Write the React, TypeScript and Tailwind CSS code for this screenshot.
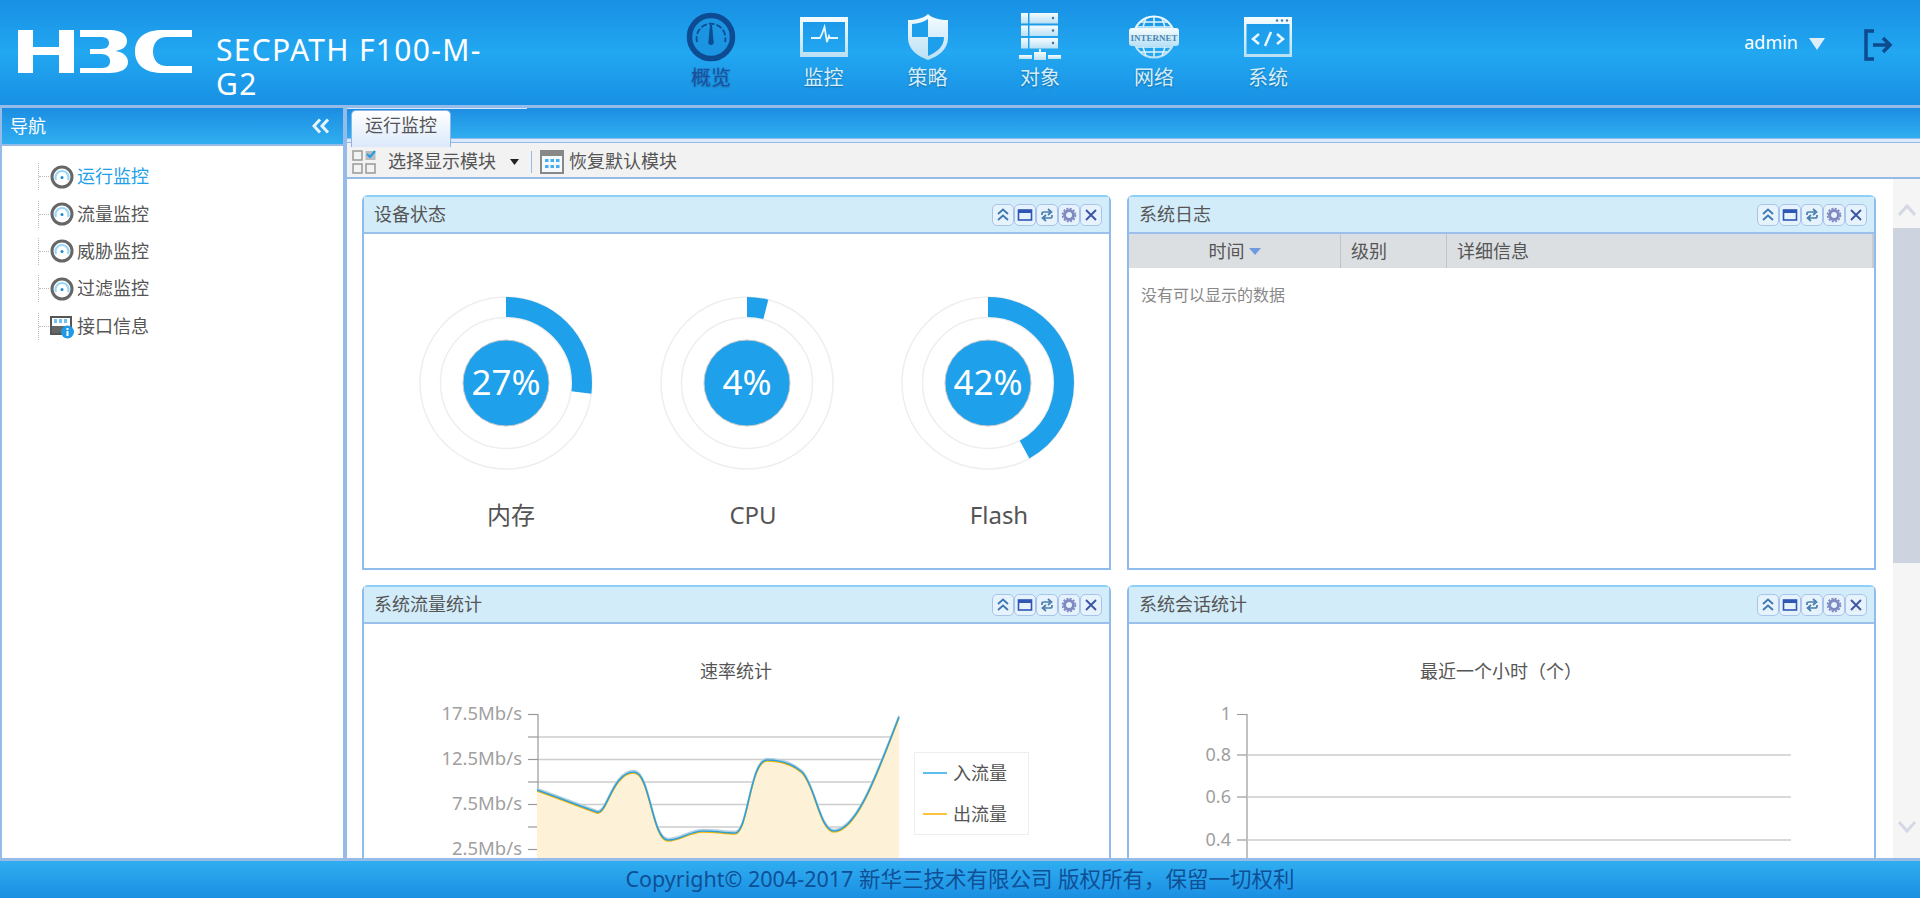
import React from "react";

const FONT = "[font-family:'Noto_Sans','Noto_Sans_CJK_SC',sans-serif]";

function Grad() {
  return (
    <defs>
      <linearGradient id="navGrad" x1="0" y1="0" x2="0" y2="1">
        <stop offset="0" stopColor="#f6fcff" />
        <stop offset="1" stopColor="#b9e0f5" />
      </linearGradient>
    </defs>
  );
}

function GaugeIcon() {
  return (
    <svg width="50" height="50" viewBox="0 0 50 50">
      <circle cx="25" cy="25" r="21.500" fill="#1b95e2" stroke="#0d4b92" strokeWidth="5.500" />
      <path d="M11 30a14.500 14.500 0 1 1 28 0" fill="none" stroke="#0d4b92" strokeWidth="1.800" strokeDasharray="6 2" />
      <path d="M24 13h2l1.500 16a2.800 2.800 0 1 1-5 0z" fill="#0d4b92" />
    </svg>
  );
}

function MonitorIcon() {
  return (
    <svg width="50" height="42" viewBox="0 0 50 42">
      <Grad />
      <path fillRule="evenodd" d="M1 1h48v40H1zM4 6v30h42V6z" fill="url(#navGrad)" />
      <path d="M12 22h9l2-4 2.500-7 2.500 15 2-6 1 2h8" fill="none" stroke="#e6f6ff" strokeWidth="1.800" />
    </svg>
  );
}

function ShieldIcon() {
  return (
    <svg width="42" height="48" viewBox="0 0 42 48">
      <Grad />
      <path d="M21 1c4 4 12 6 20 6v18c0 11-9 18-20 22C10 43 1 36 1 25V7c8 0 16-2 20-6z" fill="url(#navGrad)" />
      <path d="M21 6c-4 3-10 4.500-16 5v13h16zM21 24v19c9-4 16-9 16-19z" fill="#1e9fec" />
    </svg>
  );
}

function ServerIcon() {
  return (
    <svg width="42" height="48" viewBox="0 0 42 48">
      <Grad />
      {[0, 12.500, 25].map((y) => (
        <g key={y}>
          <rect x="2" y={y} width="7" height="10.500" fill="url(#navGrad)" />
          <rect x="10.500" y={y} width="28.500" height="10.500" fill="url(#navGrad)" />
          <circle cx="34" cy={y + 5} r="1.200" fill="#3a6f9e" />
        </g>
      ))}
      <rect x="20" y="36" width="2" height="4" fill="#dff1fb" />
      <rect x="0" y="42" width="13" height="4" fill="url(#navGrad)" />
      <rect x="15" y="39" width="12" height="8" fill="url(#navGrad)" />
      <rect x="29" y="42" width="13" height="4" fill="url(#navGrad)" />
    </svg>
  );
}

function InternetIcon() {
  return (
    <svg width="50" height="44" viewBox="0 0 50 44">
      <Grad />
      <circle cx="25" cy="22" r="20.500" fill="none" stroke="url(#navGrad)" strokeWidth="2" />
      <path d="M8 12h34M12 7h26M8 32h34M12 37h26" stroke="#e2f3fc" strokeWidth="1.500" />
      <path d="M25 2v10M17 3l-3 9M33 3l3 9M25 32v10M14 32l3 9M36 32l-3 9" stroke="#e2f3fc" strokeWidth="1.500" />
      <rect x="0" y="13" width="50" height="18" rx="3" fill="url(#navGrad)" />
      <text x="25" y="26" textAnchor="middle" fontSize="9" fontWeight="700" fill="#4a86b0" fontFamily="Liberation Serif, serif">
        INTERNET
      </text>
    </svg>
  );
}

function WindowIcon() {
  return (
    <svg width="50" height="42" viewBox="0 0 50 42">
      <Grad />
      <path fillRule="evenodd" d="M1 1h48v40H1zM3.500 8v30h43V8z" fill="url(#navGrad)" />
      <circle cx="34" cy="4.500" r="1.200" fill="#3b7fb0" />
      <circle cx="39" cy="4.500" r="1.200" fill="#3b7fb0" />
      <circle cx="44" cy="4.500" r="1.200" fill="#3b7fb0" />
      <path d="M16 18l-6 5 6 5M34 18l6 5-6 5M28 16l-6 14" fill="none" stroke="#eaf7fe" strokeWidth="2.500" />
    </svg>
  );
}

const NAV = [
  { label: "概览", icon: <GaugeIcon />, width: "w-[112px]", active: true },
  { label: "监控", icon: <MonitorIcon />, width: "w-[113px]" },
  { label: "策略", icon: <ShieldIcon />, width: "w-[95px]" },
  { label: "对象", icon: <ServerIcon />, width: "w-[130px]" },
  { label: "网络", icon: <InternetIcon />, width: "w-[98px]" },
  { label: "系统", icon: <WindowIcon />, width: "w-[130px]" },
];

function ClockIcon() {
  return (
    <svg width="26" height="26" viewBox="0 0 26 26">
      <circle cx="13" cy="13" r="10" fill="#fff" stroke="#666" strokeWidth="3" />
      <path d="M7 16a6.500 6.500 0 1 1 12 0" fill="none" stroke="#9ad6f9" strokeWidth="2.200" />
      <circle cx="13" cy="13.500" r="1.500" fill="#1e88d8" />
    </svg>
  );
}

function PortInfoIcon() {
  return (
    <svg width="26" height="26" viewBox="0 0 26 26">
      <path d="M1 3h22v13l-6 6H1z" fill="#555" />
      <rect x="3" y="5" width="18" height="8" fill="#fff" />
      <path d="M5 6h3v4H5zM10 6h3v4h-3zM15 6h3v4h-3z" fill="#6fc0f2" />
      <path d="M3 13h14l-6 7H3z" fill="#666" />
      <circle cx="18.500" cy="19" r="6.500" fill="#1e9be8" />
      <rect x="17.500" y="18" width="2" height="5" fill="#fff" />
      <rect x="17.500" y="15" width="2" height="2" fill="#fff" />
    </svg>
  );
}

const TREE = [
  { label: "运行监控", active: true, icon: <ClockIcon /> },
  { label: "流量监控", icon: <ClockIcon /> },
  { label: "威胁监控", icon: <ClockIcon /> },
  { label: "过滤监控", icon: <ClockIcon /> },
  { label: "接口信息", icon: <PortInfoIcon /> },
];

function Sidebar() {
  return (
    <aside className="w-[343px] border-l-2 border-[#97bbe8] flex flex-col bg-white">
      <div className="h-[38px] flex items-center justify-between pl-[8px] pr-[13px] bg-linear-to-b from-[#1c8de2] to-[#30aef0] border-b-2 border-[#97bbe8] text-white text-[18px]">
        <span>导航</span>
        <svg width="18" height="16" viewBox="0 0 18 16">
          <path d="M8 1.500L2 8l6 6.500M16 1.500L10 8l6 6.500" fill="none" stroke="#e8f5ff" strokeWidth="3" />
        </svg>
      </div>
      <ul className="pt-[12px] pl-[36px]">
        {TREE.map((item) => (
          <li key={item.label} className="h-[37.4px] flex items-center">
            <div className="w-[11px] h-[27px] flex items-center border-l border-dotted border-[#bbb]">
              <div className="w-full border-t border-dotted border-[#bbb]" />
            </div>
            {item.icon}
            <span className={`ml-[2px] text-[18px] ${item.active ? "text-[#1ea0ea]" : "text-[#555]"}`}>{item.label}</span>
          </li>
        ))}
      </ul>
    </aside>
  );
}

function PanelButtons() {
  const btn = "w-[22px] h-[22px] rounded-[5px] border border-[#a9c4ec] bg-[#e6f2fc] flex items-center justify-center";
  return (
    <div className="flex">
      <div className={btn}>
        <svg width="14" height="14" viewBox="0 0 14 14">
          <path d="M2 6l5-4.500L12 6M2 12l5-4.500 5 4.500" fill="none" stroke="#3f78b0" strokeWidth="1.800" />
        </svg>
      </div>
      <div className={btn}>
        <svg width="16" height="14" viewBox="0 0 16 14">
          <rect x="1.500" y="2" width="13" height="10" fill="none" stroke="#2f55b5" strokeWidth="1.600" />
          <rect x="1" y="2" width="14" height="3" fill="#2f55b5" />
        </svg>
      </div>
      <div className={btn}>
        <svg width="14" height="14" viewBox="0 0 14 14">
          <path d="M2 7V5.500C2 4.500 3 4 4 4h6M8 1l3.500 3L8 7M12 7v1.500c0 1-1 1.500-2 1.500H4M6 7l-3.500 3L6 13" fill="none" stroke="#4c7fae" strokeWidth="1.700" />
        </svg>
      </div>
      <div className={btn}>
        <svg width="16" height="16" viewBox="0 0 16 16">
          <circle cx="8" cy="8" r="4.500" fill="none" stroke="#7f8ac0" strokeWidth="3" />
          <circle cx="8" cy="8" r="6.500" fill="none" stroke="#7f8ac0" strokeWidth="1.600" strokeDasharray="2 1.400" />
        </svg>
      </div>
      <div className={btn}>
        <svg width="14" height="14" viewBox="0 0 14 14">
          <path d="M2 2l10 10M12 2L2 12" stroke="#3c55a5" strokeWidth="1.900" />
        </svg>
      </div>
    </div>
  );
}

function Panel({ title, children }: { title: string; children: React.ReactNode }) {
  return (
    <section className="h-[375px] border-2 border-[#8fbcec] border-t-[#8dd0f7] rounded-t-[6px] flex flex-col bg-white">
      <header className="h-[37px] shrink-0 flex items-center justify-between pl-[10px] pr-[7px] bg-[#d3ecfa] border-b-2 border-[#9bc0ec] text-[18px] text-[#555]">
        <span>{title}</span>
        <PanelButtons />
      </header>
      {children}
    </section>
  );
}

function Donut({ value, label, offset }: { value: number; label: string; offset: string }) {
  return (
    <div className="w-[180px] flex flex-col items-center">
      <svg width="180" height="180" viewBox="0 0 180 180">
        <circle cx="90" cy="90" r="86" fill="none" stroke="#eeeeee" strokeWidth="1.500" />
        <circle cx="90" cy="90" r="65.500" fill="none" stroke="#eeeeee" strokeWidth="1.500" />
        <circle
          cx="90"
          cy="90"
          r="76"
          fill="none"
          stroke="#1ea0ea"
          strokeWidth="20"
          pathLength={100}
          strokeDasharray={`${value} 100`}
          transform="rotate(-90 90 90)"
        />
        <circle cx="90" cy="90" r="43" fill="#1ea0ea" stroke="#c8c8c8" strokeWidth="1" />
        <text x="90" y="102" textAnchor="middle" fontSize="35" fill="#fff" fontFamily="Noto Sans, sans-serif">
          {value}%
        </text>
      </svg>
      <div className={`mt-[26px] text-[24px] leading-[32px] text-[#555] ${offset}`}>{label}</div>
    </div>
  );
}

function RateChart() {
  const grid = [737, 759.500, 782, 804.500, 827, 849.500];
  const ticks = [714.500, 737, 759.500, 782, 804.500, 827, 849.500];
  const curve =
    "M537 790C560 798 585 808 597 812C607 815 612 772 634 772C650 772 652 840 668 840C680 840 690 831 703 831C715 831 725 833 735 833C748 833 750 760 767 760C785 760 795 766 802 772C815 785 820 831 834 831C858 831 880 765 899 717";
  const labels: [string, number][] = [
    ["17.5Mb/s", 720],
    ["12.5Mb/s", 765],
    ["7.5Mb/s", 810],
    ["2.5Mb/s", 855],
  ];
  return (
    <svg width="745" height="240" viewBox="364 624 745 240" className="block">
      <text x="736" y="678" textAnchor="middle" fontSize="18" fill="#555">
        速率统计
      </text>
      {grid.map((y) => (
        <path key={y} d={`M538 ${y}H899`} stroke="#cccccc" strokeWidth="1.500" />
      ))}
      {ticks.map((y) => (
        <path key={y} d={`M528 ${y}H538`} stroke="#999" strokeWidth="1.200" />
      ))}
      <path d="M538 714V884" stroke="#999" strokeWidth="1.200" />
      {labels.map(([t, y]) => (
        <text key={t} x="522" y={y} textAnchor="end" fontSize="18.500" fill="#a0a0a0">
          {t}
        </text>
      ))}
      <path d={`${curve}V884H537Z`} fill="#fdf1d8" />
      <path d={curve} fill="none" stroke="#f5b400" strokeWidth="1.500" transform="translate(0 1)" />
      <path d={curve} fill="none" stroke="#b5cfdc" strokeWidth="1.500" transform="translate(0 -1.500)" />
      <path d={curve} fill="none" stroke="#2f9fd8" strokeWidth="1.600" />
      <rect x="914.500" y="752.500" width="114" height="82" fill="#fff" stroke="#eeeeee" />
      <path d="M923 773H947" stroke="#4db6ee" strokeWidth="1.800" />
      <text x="953" y="780" fontSize="18" fill="#555">
        入流量
      </text>
      <path d="M923 814H947" stroke="#f9b000" strokeWidth="1.500" />
      <text x="953" y="821" fontSize="18" fill="#555">
        出流量
      </text>
    </svg>
  );
}

function SessionChart() {
  const rows: [string, number][] = [
    ["0.8", 755],
    ["0.6", 797],
    ["0.4", 840],
  ];
  return (
    <svg width="745" height="240" viewBox="1129 624 745 240" className="block">
      <text x="1501" y="678" textAnchor="middle" fontSize="18" fill="#555">
        最近一个小时（个）
      </text>
      <path d="M1247 714V884M1237 714.500H1247" stroke="#999" strokeWidth="1.200" fill="none" />
      <text x="1231" y="720" textAnchor="end" fontSize="18" fill="#a0a0a0">
        1
      </text>
      {rows.map(([t, y]) => (
        <g key={t}>
          <path d={`M1247 ${y}H1791`} stroke="#cccccc" strokeWidth="1.500" />
          <path d={`M1237 ${y}H1247`} stroke="#999" strokeWidth="1.200" />
          <text x="1231" y={y + 6} textAnchor="end" fontSize="18" fill="#a0a0a0">
            {t}
          </text>
        </g>
      ))}
    </svg>
  );
}

function Scrollbar() {
  return (
    <div className="w-[27px] shrink-0 bg-[#f5f5f5] flex flex-col">
      <div className="h-[49px] flex items-center justify-center pt-[12px]">
        <svg width="18" height="12" viewBox="0 0 18 12">
          <path d="M1 11l8-9 8 9" fill="none" stroke="#d3d8e4" strokeWidth="3" />
        </svg>
      </div>
      <div className="h-[335px] bg-[#ced3e0]" />
      <div className="flex-1 flex items-end justify-center pb-[25px]">
        <svg width="18" height="12" viewBox="0 0 18 12">
          <path d="M1 1l8 9 8-9" fill="none" stroke="#d3d8e4" strokeWidth="3" />
        </svg>
      </div>
    </div>
  );
}

export default function App() {
  return (
    <div className={`h-[898px] w-full overflow-hidden flex flex-col ${FONT}`}>
      {/* Top bar */}
      <div className="h-[105px] shrink-0 flex bg-linear-to-b from-[#1890e4] via-[#22a7f1] to-[#1890e4] text-white">
        <div className="w-[655px] shrink-0 flex pl-[18px]">
          <svg width="174" height="43" viewBox="0 0 174 43" className="mt-[30px] shrink-0">
            <path
              fill="#fff"
              d="M0 0h15v17h26V0h15v43H41V25H15v18H0zM62 0h30c12 0 17 5 17 11c0 6-5 9-12 10c8 1 13 5 13 11c0 7-7 11-19 11H62v-5h22c6 0 8-3 8-7c0-4-3-7-9-7H72v-5h11c6 0 8-3 8-6c0-4-3-6-8-6H62zM174 0v7h-25c-9 0-14 6-14 14.500s5 14.500 14 14.500h25v7h-30c-18 0-27-9-27-21.500S126 0 144 0z"
            />
          </svg>
          <div className="ml-[24px] mt-[33px] w-[285px] text-[30px] leading-[34px] tracking-[1.3px]">SECPATH F100-M-G2</div>
        </div>
        <nav className="flex">
          {NAV.map((n) => (
            <div key={n.label} className={`${n.width} h-full flex flex-col items-center pt-[12px]`}>
              <div className="h-[50px] flex items-center justify-center">{n.icon}</div>
              <span
                className={`mt-[3px] text-[20px] leading-[26px] [text-shadow:0_1px_2px_rgba(0,0,0,0.3)] ${
                  n.active ? "text-[#1c4f9f]" : "text-[#d6eefb]"
                }`}
              >
                {n.label}
              </span>
            </div>
          ))}
        </nav>
        <div className="flex-1 flex items-start justify-end pr-[27px]">
          <span className="mt-[30px] text-[18px] leading-[24px]">admin</span>
          <svg width="16" height="12" viewBox="0 0 16 12" className="mt-[38px] ml-[11px]">
            <path d="M0 0h16L8 12z" fill="#dfeef6" />
          </svg>
          <svg width="30" height="32" viewBox="0 0 30 32" className="mt-[29px] ml-[38px]">
            <path d="M11 2H3v28h8" fill="none" stroke="#0e4a8e" strokeWidth="3.500" />
            <path d="M10 16h17M20 9l7 7-7 7" fill="none" stroke="#0e4a8e" strokeWidth="3.500" />
          </svg>
        </div>
      </div>

      {/* Middle */}
      <div className="flex-1 min-h-0 flex border-t-[3px] border-[#97bbe8]">
        <Sidebar />
        <main className="flex-1 min-w-0 flex flex-col border-l-4 border-[#97bbe8] bg-white">
          <div className="relative h-[30px] shrink-0 pl-[4px] pr-[2px] bg-linear-to-b from-[#1c8de2] to-[#30aef0]">
            <div className="absolute left-0 top-0 w-[180px] h-[1px] bg-[#d5e6fb]" />
            <div className="h-[37px] w-[100px] mt-[2px] rounded-t-[5px] border border-b-0 border-[#8db4e8] bg-linear-to-b from-white to-[#dce9fb] text-[18px] text-[#555] text-center leading-[28px]">
              运行监控
            </div>
          </div>
          <div className="h-[5px] shrink-0 border-y border-[#97bbe8] bg-[#dce9fb]" />
          <div className="h-[36px] shrink-0 flex items-center pt-[3px] bg-[#f2f2f2] border-b-2 border-[#97bbe8] text-[18px] text-[#555]">
            <svg width="24" height="24" viewBox="0 0 24 24" className="ml-[5px]">
              <path d="M1 1h9v9H1zM1 14h9v9H1zM14 14h9v9h-9z" fill="none" stroke="#999" strokeWidth="1.500" />
              <rect x="13.500" y="1" width="10" height="9" fill="#bbb" />
              <path d="M15 4l3 3 5-6" fill="none" stroke="#1e9be8" strokeWidth="2" />
            </svg>
            <span className="ml-[12px]">选择显示模块</span>
            <svg width="9" height="6" viewBox="0 0 9 6" className="ml-[14px]">
              <path d="M0 0h9L4.500 6z" fill="#222" />
            </svg>
            <div className="ml-[12px] h-[22px] w-[1px] bg-[#97bbe8]" />
            <svg width="24" height="24" viewBox="0 0 24 24" className="ml-[8px]">
              <rect x="0" y="0" width="24" height="24" fill="#888" />
              <rect x="2" y="6" width="20" height="16" fill="#f4f9fd" />
              <path d="M5 9h3.500v3H5zM10.500 9H14v3h-3.500zM16 9h3.500v3H16zM5 15h3.500v3H5zM10.500 15H14v3h-3.500zM16 15h3.500v3H16z" fill="#47aef0" />
            </svg>
            <span className="ml-[5px]">恢复默认模块</span>
          </div>
          <div className="flex-1 min-h-0 flex">
            <div className="flex-1 min-w-0 overflow-hidden pl-[15px] pt-[16px]">
              <div className="grid grid-cols-[749px_749px] gap-x-[16px] gap-y-[15px]">
                <Panel title="设备状态">
                  <div className="flex pl-[52px] pt-[59px] gap-[61px]">
                    <Donut value={27} label="内存" offset="ml-[10px]" />
                    <Donut value={4} label="CPU" offset="ml-[12px]" />
                    <Donut value={42} label="Flash" offset="ml-[22px]" />
                  </div>
                </Panel>
                <Panel title="系统日志">
                  <div className="h-[34px] shrink-0 flex items-center bg-[#dcdfe2] border-r-2 border-[#c8ccd0] text-[18px] text-[#555]">
                    <div className="w-[212px] h-full flex items-center justify-center gap-[4px] border-r border-[#c0c4c8]">
                      <span>时间</span>
                      <svg width="12" height="7" viewBox="0 0 12 7">
                        <path d="M0 0h12L6 7z" fill="#6f9ae0" />
                      </svg>
                    </div>
                    <div className="w-[106px] h-full flex items-center pl-[10px] border-r border-[#c0c4c8]">级别</div>
                    <div className="pl-[10px]">详细信息</div>
                  </div>
                  <div className="pl-[12px] pt-[15px] text-[16px] text-[#888]">没有可以显示的数据</div>
                </Panel>
                <Panel title="系统流量统计">
                  <RateChart />
                </Panel>
                <Panel title="系统会话统计">
                  <SessionChart />
                </Panel>
              </div>
            </div>
            <Scrollbar />
          </div>
        </main>
      </div>

      {/* Footer */}
      <footer className="h-[40px] shrink-0 border-t-[3px] border-[#97bbe8] bg-linear-to-b from-[#30aef0] to-[#1a8fe3] flex items-center justify-center text-[21.5px] text-[#0f4f96]">
        Copyright© 2004-2017 新华三技术有限公司 版权所有，保留一切权利
      </footer>
    </div>
  );
}
